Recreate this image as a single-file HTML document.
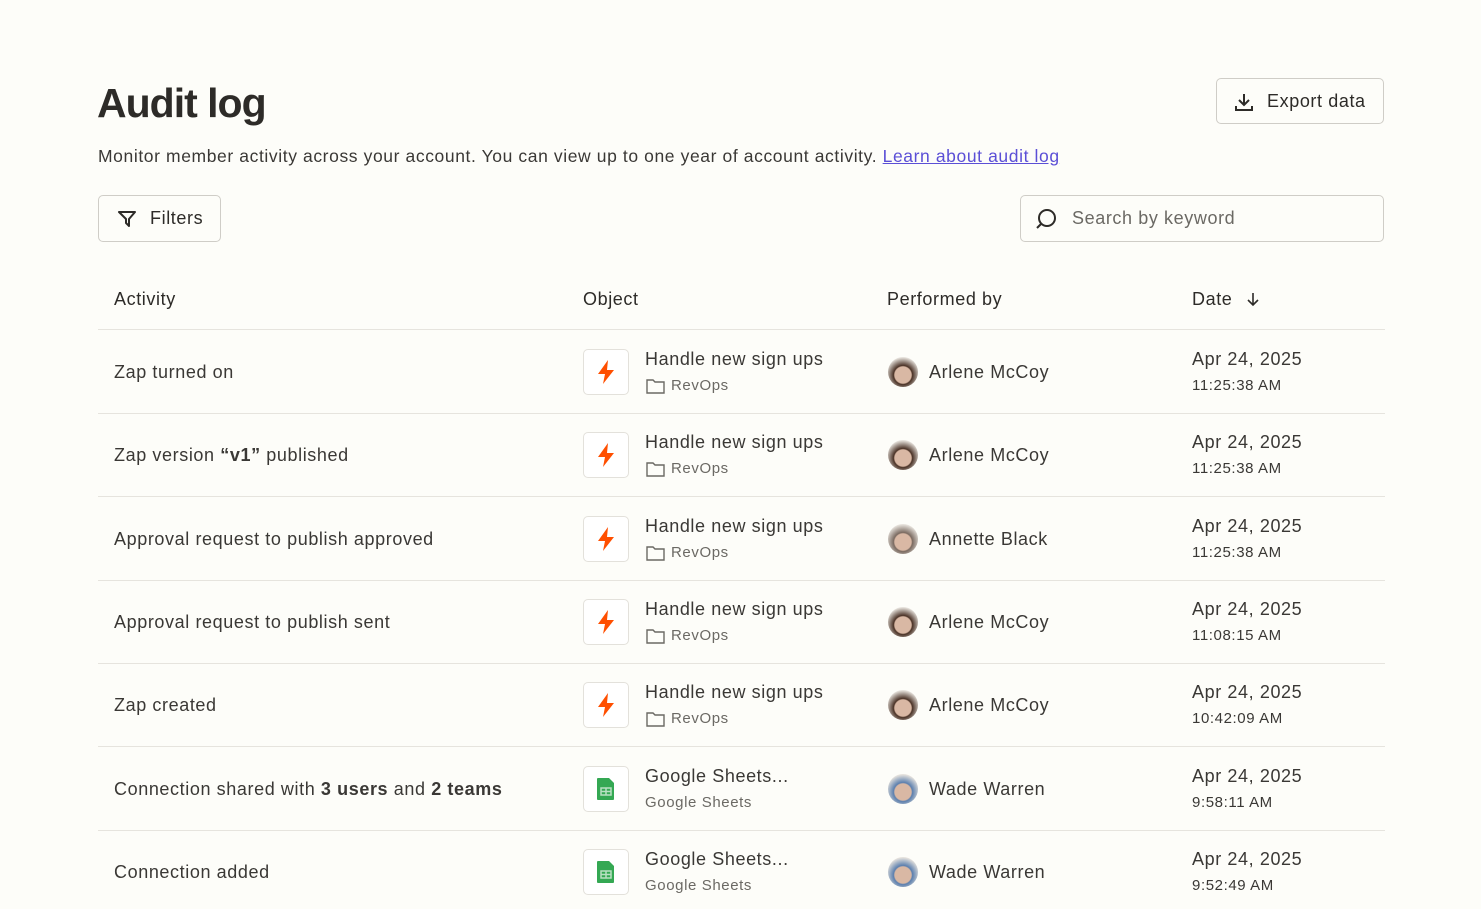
<!DOCTYPE html>
<html><head><meta charset="utf-8"><style>
*{box-sizing:border-box;margin:0;padding:0}
body{width:1481px;height:909px;overflow:hidden;background:#fdfdf9;font-family:"Liberation Sans",sans-serif;color:#2d2b28;position:relative;letter-spacing:0.6px}
.a{position:absolute;white-space:nowrap}
h1{position:absolute;left:97px;top:80px;font-size:41px;font-weight:700;letter-spacing:-1px;color:#2d2b28}
.btn{position:absolute;border:1.5px solid #cfcdc7;border-radius:5px;background:#fdfdf9}
.sep{position:absolute;left:98px;width:1287px;height:1px;background:#e6e4de}
.ic{position:absolute;left:583px;width:46px;height:46px;border:1.5px solid #e3e1db;border-radius:5px;background:#fff;display:flex;align-items:center;justify-content:center}
.av{position:absolute;left:888px;width:30px;height:30px;border-radius:50%}
.t{font-size:18px;color:#3a3835}
.s{font-size:15px;color:#6b6964}
</style></head><body>
<h1>Audit log</h1>
<div class="a" style="left:98px;top:146px;font-size:17.5px;color:#3a3835">Monitor member activity across your account. You can view up to one year of account activity. <span style="color:#5b4fd6;text-decoration:underline">Learn about audit log</span></div>
<div class="btn" style="left:1216px;top:78px;width:168px;height:46px"></div>
<svg class="a" style="left:1233px;top:91px" width="22" height="22" viewBox="0 0 22 22" fill="none" stroke="#2d2b28" stroke-width="2"><path d="M11 3v11M6 9l5 5 5-5M3 15v4h16v-4"/></svg>
<div class="a" style="left:1267px;top:91px;font-size:18px">Export data</div>
<div class="btn" style="left:98px;top:195px;width:123px;height:47px"></div>
<svg class="a" style="left:116px;top:208px" width="22" height="22" viewBox="0 0 22 22" fill="none" stroke="#2d2b28" stroke-width="2" stroke-linejoin="round"><path d="M3 4h16l-6 7v7l-3-3v-4z"/></svg>
<div class="a" style="left:150px;top:208px;font-size:18px">Filters</div>
<div class="btn" style="left:1020px;top:195px;width:364px;height:47px"></div>
<svg class="a" style="left:1033px;top:206px" width="26" height="26" viewBox="0 0 26 26" fill="none" stroke="#2d2b28" stroke-width="2"><circle cx="14" cy="12" r="8"/><path d="M8 18l-4 4"/></svg>
<div class="a" style="left:1072px;top:208px;font-size:18px;color:#6b6964">Search by keyword</div>
<div class="a t" style="left:114px;top:289px;color:#2d2b28">Activity</div>
<div class="a t" style="left:583px;top:289px;color:#2d2b28">Object</div>
<div class="a t" style="left:887px;top:289px;color:#2d2b28">Performed by</div>
<div class="a t" style="left:1192px;top:289px;color:#2d2b28">Date</div>
<svg class="a" style="left:1245px;top:291px" width="16" height="16" viewBox="0 0 16 16" fill="none" stroke="#2d2b28" stroke-width="1.6"><path d="M8 2v12M3 9l5 5 5-5"/></svg>
<div class="sep" style="top:329px"></div>
<div id="rows"></div>
<script>
var R=[["Zap turned on",0,"Arlene McCoy","11:25:38 AM","#4a3226"],
["Zap version <b>“v1”</b> published",0,"Arlene McCoy","11:25:38 AM","#4a3226"],
["Approval request to publish approved",0,"Annette Black","11:25:38 AM","#7a6a60"],
["Approval request to publish sent",0,"Arlene McCoy","11:08:15 AM","#4a3226"],
["Zap created",0,"Arlene McCoy","10:42:09 AM","#4a3226"],
["Connection shared with <b>3 users</b> and <b>2 teams</b>",1,"Wade Warren","9:58:11 AM","#5b7fae"],
["Connection added",1,"Wade Warren","9:52:49 AM","#5b7fae"]];
var h="";
R.forEach(function(r,i){var y=330+i*83.3,c=y+42;
h+='<div class="a t" style="left:114px;top:'+(c-10)+'px">'+r[0]+'</div>';
h+='<div class="ic" style="top:'+(c-23)+'px">'+(r[1]?'<svg width="20" height="24" viewBox="0 0 20 24"><path d="M2 1h11l5 5v16a1 1 0 0 1-1 1H2a1 1 0 0 1-1-1V2a1 1 0 0 1 1-1z" fill="#34a853"/><rect x="5" y="11" width="10" height="7" fill="none" stroke="#b8e0c2" stroke-width="1.5"/><path d="M10 11v7M5 14.5h10" stroke="#b8e0c2" stroke-width="1.5"/></svg>':'<svg width="22" height="26" viewBox="0 0 22 26"><path d="M13 1L3 15h7l-2 10 11-14h-7z" fill="#ff4f00"/></svg>')+'</div>';
h+='<div class="a t" style="left:645px;top:'+(c-23)+'px">'+(r[1]?'Google Sheets...':'Handle new sign ups')+'</div>';
h+=r[1]?'<div class="a s" style="left:645px;top:'+(c+5)+'px">Google Sheets</div>':'<svg class="a" style="left:646px;top:'+(c+6)+'px" width="19" height="16" viewBox="0 0 19 16" fill="none" stroke="#6b6964" stroke-width="1.4"><path d="M1 2h6l2 2h9v11H1z"/></svg><div class="a s" style="left:671px;top:'+(c+5)+'px">RevOps</div>';
h+='<div class="av" style="top:'+(c-15)+'px;background:radial-gradient(circle at 50% 60%,#d9b8a4 0 35%,'+r[4]+' 40%,#e8e4de 75%)"></div>';
h+='<div class="a t" style="left:929px;top:'+(c-10)+'px">'+r[2]+'</div>';
h+='<div class="a t" style="left:1192px;top:'+(c-23)+'px">Apr 24, 2025</div>';
h+='<div class="a s" style="left:1192px;top:'+(c+5)+'px;color:#3a3835">'+r[3]+'</div>';
if(i<6)h+='<div class="sep" style="top:'+(y+83)+'px"></div>';});
document.getElementById("rows").innerHTML=h;
</script>
</body></html>
